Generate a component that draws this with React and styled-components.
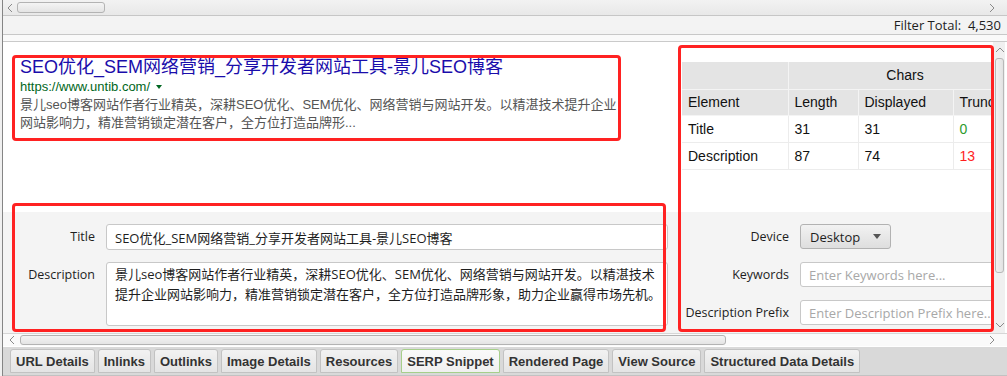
import React from 'react';
import styled, { createGlobalStyle } from 'styled-components';

const GlobalStyle = createGlobalStyle`
  html, body {
    margin: 0;
    padding: 0;
    background: #f0f0f0;
  }
  body {
    width: 1007px;
    height: 376px;
    overflow: hidden;
  }
  * { box-sizing: border-box; }
`;

const UI = `"Open Sans", "Noto Sans", "Noto Sans CJK SC", sans-serif`;
const ARIAL = `"Liberation Sans", Arial, "Noto Sans CJK SC", sans-serif`;
const CJK = `"Open Sans", "Noto Sans CJK SC", sans-serif`;

const Window = styled.div`
  width: 1007px;
  height: 376px;
  padding-left: 2px;
  background: #f0f0f0;
`;

const Frame = styled.div`
  height: 100%;
  border-left: 1px solid #858585;
  display: flex;
  flex-direction: column;
  background: #fff;
`;

const HBar = styled.div`
  height: ${p => p.$h}px;
  flex: none;
  display: flex;
  align-items: center;
  background: ${p => p.$bg || 'linear-gradient(#f2f2f2, #e8e8e8)'};
  border-bottom: ${p => (p.$noBorder ? 'none' : '1px solid #c6c6c6')};
  border-top: ${p => (p.$top ? '1px solid #d6d6d6' : 'none')};
`;

const Arrow = styled.div`
  width: ${p => p.$w || 16}px;
  height: ${p => p.$h || 'auto'};
  flex: none;
  display: flex;
  justify-content: center;
  align-items: center;
`;

const Thumb = styled.div`
  width: ${p => p.$w}px;
  height: ${p => p.$h || 11}px;
  flex: none;
  border: 1px solid #b3b3b3;
  border-radius: 3px;
  background: linear-gradient(#f4f4f4, #e4e4e4);
`;

const Spacer = styled.div`
  flex: 1;
`;

const FilterBar = styled.div`
  height: 19px;
  flex: none;
  background: #f3f3f3;
  border-bottom: 1px solid #c8c8c8;
  display: flex;
  justify-content: flex-end;
  align-items: center;
  padding-right: 6px;
  font-family: ${UI};
  font-size: 13px;
  color: #1e1e1e;
  white-space: pre;
`;

const Strip = styled.div`
  height: 7px;
  flex: none;
  background: #fafafa;
  border-bottom: 1px solid #cacaca;
`;

const Body = styled.div`
  position: relative;
  height: 291px;
  flex: none;
  display: flex;
`;

const Panes = styled.div`
  width: 990px;
  display: grid;
  grid-template-columns: 673px 317px;
  grid-template-rows: 170px 121px;
  overflow: hidden;
`;

const Snippet = styled.div`
  padding: 15px 0 0 17px;
  background: #fff;
`;

const SnipTitle = styled.div`
  font-family: ${ARIAL};
  font-size: 18px;
  line-height: 21px;
  color: #1a0dab;
`;

const SnipUrl = styled.div`
  font-family: ${ARIAL};
  font-size: 13px;
  line-height: 18px;
  color: #006621;
  display: flex;
  align-items: center;
  gap: 6px;
`;

const Caret = styled.span`
  width: 0;
  height: 0;
  border-left: ${p => p.$s || 3}px solid transparent;
  border-right: ${p => p.$s || 3}px solid transparent;
  border-top: ${p => (p.$s || 3) + 1}px solid ${p => p.$c || '#006621'};
  display: inline-block;
`;

const SnipDesc = styled.div`
  width: 604px;
  font-family: ${ARIAL};
  font-size: 13px;
  line-height: 18px;
  color: #545454;
`;

const TablePane = styled.div`
  padding: 20px 0 0 6px;
  background: #fff;
  overflow: hidden;
`;

const Table = styled.table`
  border-collapse: collapse;
  table-layout: fixed;
  width: 340px;
  font-family: ${ARIAL};
  font-size: 14px;
  color: #111;
`;

const Th = styled.th`
  font-weight: normal;
  text-align: ${p => (p.$center ? 'center' : 'left')};
  background: #e4e4e4;
  height: ${p => p.$h || 26}px;
  padding: 0 6px;
  border-right: 1px solid #f4f4f4;
  border-bottom: 1px solid #f4f4f4;
  white-space: nowrap;
`;

const Td = styled.td`
  height: 27px;
  padding: 0 6px;
  border-right: 1px solid #ececec;
  border-bottom: 1px solid #ececec;
  color: ${p => p.$c || '#111'};
`;

const FormPane = styled.div`
  background: #f4f4f4;
  padding-top: 12px;
  display: grid;
  grid-template-columns: ${p => p.$label}px auto;
  column-gap: 11px;
  row-gap: ${p => p.$gap}px;
  align-content: start;
  overflow: hidden;
`;

const Label = styled.div`
  font-family: ${UI};
  font-size: 12.5px;
  color: #1e1e1e;
  text-align: right;
  white-space: nowrap;
  line-height: ${p => p.$lh || 25}px;
`;

const Field = styled.input`
  width: ${p => p.$w}px;
  height: ${p => p.$h || 26}px;
  border: 1px solid #c8c8c8;
  border-radius: 3px;
  background: #fff;
  padding: 0 8px;
  font-family: ${CJK};
  font-size: 13px;
  color: #1e1e1e;
  outline: none;
  &::placeholder {
    color: #a8a8a8;
  }
`;

const Area = styled.textarea`
  width: 562px;
  height: 64px;
  border: 1px solid #c8c8c8;
  border-radius: 3px;
  background: #fff;
  padding: 1px 3px 1px 8px;
  font-family: ${CJK};
  font-size: 13px;
  line-height: 20px;
  color: #1e1e1e;
  resize: none;
  outline: none;
  overflow: hidden;
`;

const Select = styled.div`
  width: 91px;
  height: 25px;
  border: 1px solid #b2b2b2;
  border-radius: 3px;
  background: linear-gradient(#f2f2f2, #dedede);
  display: flex;
  align-items: center;
  justify-content: space-between;
  padding: 0 9px;
  font-family: ${UI};
  font-size: 13px;
  color: #1e1e1e;
`;

const VScroll = styled.div`
  width: 12px;
  flex: none;
  background: #f0f0f0;
  display: flex;
  flex-direction: column;
  align-items: center;
  padding-left: 1px;
`;

const VThumb = styled.div`
  width: 9px;
  height: 215px;
  border: 1px solid #b8b8b8;
  border-radius: 3px;
  background: linear-gradient(90deg, #f2f2f2, #e2e2e2);
`;

const Mark = styled.div`
  position: absolute;
  left: ${p => p.$x}px;
  top: ${p => p.$y}px;
  width: ${p => p.$w}px;
  height: ${p => p.$h}px;
  border: 3px solid #ff2222;
  border-radius: 4px;
  pointer-events: none;
`;

const Tabs = styled.div`
  flex: 1;
  background: #d9d9d9;
  border-top: 1px solid #fff;
  border-bottom: 1px solid #c2c2c2;
  display: flex;
  gap: 3px;
  padding: 2px 0 0 7px;
  align-items: flex-start;
`;

const Tab = styled.div`
  height: 24px;
  padding: 0 5px;
  display: flex;
  align-items: center;
  border: 1px solid ${p => (p.$active ? '#a6cf8a' : '#c2c2c2')};
  border-radius: 3px 3px 0 0;
  background: ${p => (p.$active ? 'linear-gradient(#fafafa, #f0f0f0)' : 'linear-gradient(#f2f2f2, #e4e4e4)')};
  font-family: ${ARIAL};
  font-weight: bold;
  font-size: 13px;
  color: #333;
  white-space: nowrap;
`;

const Chevron = ({ dir }) => {
  const pts = {
    left: '5,1 1,5 5,9',
    right: '1,1 5,5 1,9',
    up: '1,5 5,1 9,5',
    down: '1,1 5,5 9,1',
  }[dir];
  const vertical = dir === 'up' || dir === 'down';
  return (
    <svg width={vertical ? 10 : 6} height={vertical ? 6 : 10} viewBox={vertical ? '0 0 10 6' : '0 0 6 10'}>
      <polyline points={pts} fill="none" stroke="#8a8a8a" strokeWidth="1" />
    </svg>
  );
};

const tabs = [
  'URL Details',
  'Inlinks',
  'Outlinks',
  'Image Details',
  'Resources',
  'SERP Snippet',
  'Rendered Page',
  'View Source',
  'Structured Data Details',
];

const titleText = 'SEO优化_SEM网络营销_分享开发者网站工具-景儿SEO博客';
const descText =
  '景儿seo博客网站作者行业精英，深耕SEO优化、SEM优化、网络营销与网站开发。以精湛技术提升企业网站影响力，精准营销锁定潜在客户，全方位打造品牌形象，助力企业赢得市场先机。';

export default function App() {
  return (
    <Window>
      <GlobalStyle />
      <Frame>
        <HBar $h={16}>
          <Arrow $w={14}><Chevron dir="left" /></Arrow>
          <Thumb $w={88} />
          <Spacer />
          <Arrow $w={30}><Chevron dir="right" /></Arrow>
        </HBar>
        <FilterBar>Filter Total:  4,530</FilterBar>
        <Strip />

        <Body>
          <Panes>
            <Snippet>
              <SnipTitle>{titleText}</SnipTitle>
              <SnipUrl>
                https://www.untib.com/ <Caret />
              </SnipUrl>
              <SnipDesc>
                景儿seo博客网站作者行业精英，深耕SEO优化、SEM优化、网络营销与网站开发。以精湛技术提升企业网站影响力，精准营销锁定潜在客户，全方位打造品牌形...
              </SnipDesc>
            </Snippet>

            <TablePane>
              <Table>
                <colgroup>
                  <col style={{ width: 106 }} />
                  <col style={{ width: 70 }} />
                  <col style={{ width: 95 }} />
                  <col style={{ width: 69 }} />
                </colgroup>
                <thead>
                  <tr>
                    <Th $h={27} />
                    <Th $h={27} $center colSpan={3}>Chars</Th>
                  </tr>
                  <tr>
                    <Th>Element</Th>
                    <Th>Length</Th>
                    <Th>Displayed</Th>
                    <Th>Truncated</Th>
                  </tr>
                </thead>
                <tbody>
                  <tr>
                    <Td>Title</Td>
                    <Td>31</Td>
                    <Td>31</Td>
                    <Td $c="#2e9a2e">0</Td>
                  </tr>
                  <tr>
                    <Td>Description</Td>
                    <Td>87</Td>
                    <Td>74</Td>
                    <Td $c="#ff1e1e">13</Td>
                  </tr>
                </tbody>
              </Table>
            </TablePane>

            <FormPane $label={92} $gap={12}>
              <Label $lh={26}>Title</Label>
              <Field $w={562} readOnly value={titleText} />
              <Label $lh={26}>Description</Label>
              <Area readOnly value={descText} />
            </FormPane>

            <FormPane $label={113} $gap={13}>
              <Label>Device</Label>
              <Select>
                Desktop <Caret $s={4} $c="#555" />
              </Select>
              <Label>Keywords</Label>
              <Field $w={260} $h={25} placeholder="Enter Keywords here..." />
              <Label>Description Prefix</Label>
              <Field $w={260} $h={25} placeholder="Enter Description Prefix here..." />
            </FormPane>
          </Panes>

          <VScroll>
            <Arrow $w={10} $h="16px"><Chevron dir="up" /></Arrow>
            <VThumb />
            <Spacer />
            <Arrow $w={10} $h="16px"><Chevron dir="down" /></Arrow>
          </VScroll>

          <Mark $x={9} $y={13} $w={609} $h={86} />
          <Mark $x={9} $y={161} $w={654} $h={129} />
          <Mark $x={675} $y={3} $w={316} $h={287} />
        </Body>

        <HBar $h={13} $bg="#fafafa" $noBorder $top>
          <Arrow $w={17}><Chevron dir="left" /></Arrow>
          <Thumb $w={706} $h={10} />
          <Spacer />
          <Arrow $w={30}><Chevron dir="right" /></Arrow>
        </HBar>

        <Tabs>
          {tabs.map(t => (
            <Tab key={t} $active={t === 'SERP Snippet'}>{t}</Tab>
          ))}
        </Tabs>
      </Frame>
    </Window>
  );
}
